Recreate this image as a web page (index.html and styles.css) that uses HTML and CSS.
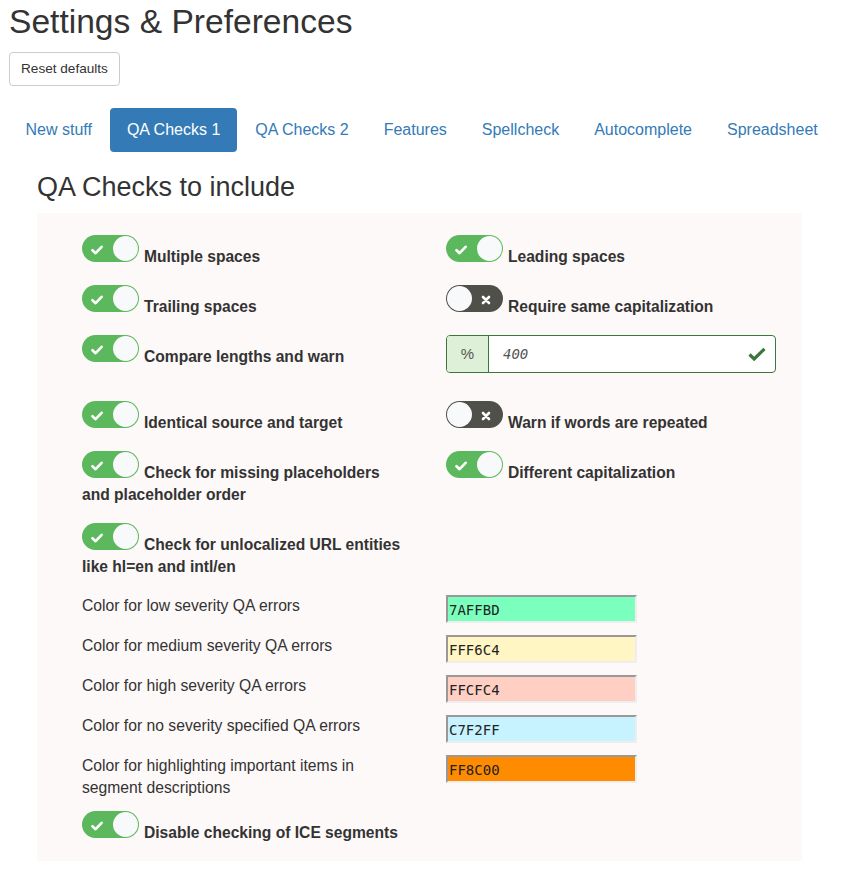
FILE: index.html
```html
<!DOCTYPE html>
<html lang="en">
<head>
<meta charset="utf-8">
<title>Settings &amp; Preferences</title>
<link rel="stylesheet" href="styles.css">
</head>
<body>
<div class="page">
  <h1 class="title">Settings &amp; Preferences</h1>
  <button class="btn" type="button">Reset defaults</button>
  <ul class="pills">
    <li><a href="#">New stuff</a></li>
    <li class="active"><a href="#">QA Checks 1</a></li>
    <li><a href="#">QA Checks 2</a></li>
    <li><a href="#">Features</a></li>
    <li><a href="#">Spellcheck</a></li>
    <li><a href="#">Autocomplete</a></li>
    <li><a href="#">Spreadsheet</a></li>
  </ul>
  <section class="tab">
    <h3 class="section-title">QA Checks to include</h3>
    <div class="panel">
      <div class="grid">
        <div class="cell"><span class="toggle on"><span class="track"><svg class="ico" width="12" height="10" viewBox="0 0 12 10"><path d="M1.5 5.2 L4.6 8.2 L10.6 1.8" fill="none" stroke="#fff" stroke-width="2.6" stroke-linecap="round" stroke-linejoin="round"/></svg><span class="knob"></span></span></span><span class="lbl">Multiple spaces</span></div>
        <div class="cell"><span class="toggle on"><span class="track"><svg class="ico" width="12" height="10" viewBox="0 0 12 10"><path d="M1.5 5.2 L4.6 8.2 L10.6 1.8" fill="none" stroke="#fff" stroke-width="2.6" stroke-linecap="round" stroke-linejoin="round"/></svg><span class="knob"></span></span></span><span class="lbl">Leading spaces</span></div>

        <div class="cell"><span class="toggle on"><span class="track"><svg class="ico" width="12" height="10" viewBox="0 0 12 10"><path d="M1.5 5.2 L4.6 8.2 L10.6 1.8" fill="none" stroke="#fff" stroke-width="2.6" stroke-linecap="round" stroke-linejoin="round"/></svg><span class="knob"></span></span></span><span class="lbl">Trailing spaces</span></div>
        <div class="cell"><span class="toggle off"><span class="track"><span class="knob"></span><svg class="ico" width="10" height="10" viewBox="0 0 10 10"><path d="M2 2 L8 8 M8 2 L2 8" fill="none" stroke="#fff" stroke-width="2.6" stroke-linecap="round"/></svg></span></span><span class="lbl">Require same capitalization</span></div>

        <div class="cell"><span class="toggle on"><span class="track"><svg class="ico" width="12" height="10" viewBox="0 0 12 10"><path d="M1.5 5.2 L4.6 8.2 L10.6 1.8" fill="none" stroke="#fff" stroke-width="2.6" stroke-linecap="round" stroke-linejoin="round"/></svg><span class="knob"></span></span></span><span class="lbl">Compare lengths and warn</span></div>
        <div class="cell cell-input">
          <div class="input-group">
            <span class="addon">%</span>
            <input class="num" type="text" value="400">
            <svg class="ok" width="18" height="14" viewBox="0 0 18 14"><path d="M1.5 7.5 L6.2 12 L16.5 1.8" fill="none" stroke="#3c763d" stroke-width="3.2" stroke-linejoin="miter"/></svg>
          </div>
        </div>

        <div class="cell"><span class="toggle on"><span class="track"><svg class="ico" width="12" height="10" viewBox="0 0 12 10"><path d="M1.5 5.2 L4.6 8.2 L10.6 1.8" fill="none" stroke="#fff" stroke-width="2.6" stroke-linecap="round" stroke-linejoin="round"/></svg><span class="knob"></span></span></span><span class="lbl">Identical source and target</span></div>
        <div class="cell"><span class="toggle off"><span class="track"><span class="knob"></span><svg class="ico" width="10" height="10" viewBox="0 0 10 10"><path d="M2 2 L8 8 M8 2 L2 8" fill="none" stroke="#fff" stroke-width="2.6" stroke-linecap="round"/></svg></span></span><span class="lbl">Warn if words are repeated</span></div>

        <div class="cell"><span class="toggle on"><span class="track"><svg class="ico" width="12" height="10" viewBox="0 0 12 10"><path d="M1.5 5.2 L4.6 8.2 L10.6 1.8" fill="none" stroke="#fff" stroke-width="2.6" stroke-linecap="round" stroke-linejoin="round"/></svg><span class="knob"></span></span></span><span class="lbl">Check for missing placeholders and placeholder order</span></div>
        <div class="cell"><span class="toggle on"><span class="track"><svg class="ico" width="12" height="10" viewBox="0 0 12 10"><path d="M1.5 5.2 L4.6 8.2 L10.6 1.8" fill="none" stroke="#fff" stroke-width="2.6" stroke-linecap="round" stroke-linejoin="round"/></svg><span class="knob"></span></span></span><span class="lbl">Different capitalization</span></div>

        <div class="cell first"><span class="toggle on"><span class="track"><svg class="ico" width="12" height="10" viewBox="0 0 12 10"><path d="M1.5 5.2 L4.6 8.2 L10.6 1.8" fill="none" stroke="#fff" stroke-width="2.6" stroke-linecap="round" stroke-linejoin="round"/></svg><span class="knob"></span></span></span><span class="lbl">Check for unlocalized URL entities like hl=en and intl/en</span></div>

        <div class="cell color-label first">Color for low severity QA errors</div>
        <div class="cell color-cell"><input class="swatch" type="text" value="7AFFBD" style="background-color:#7AFFBD"></div>

        <div class="cell color-label first">Color for medium severity QA errors</div>
        <div class="cell color-cell"><input class="swatch" type="text" value="FFF6C4" style="background-color:#FFF6C4"></div>

        <div class="cell color-label first">Color for high severity QA errors</div>
        <div class="cell color-cell"><input class="swatch" type="text" value="FFCFC4" style="background-color:#FFCFC4"></div>

        <div class="cell color-label first">Color for no severity specified QA errors</div>
        <div class="cell color-cell"><input class="swatch" type="text" value="C7F2FF" style="background-color:#C7F2FF"></div>

        <div class="cell color-label first">Color for highlighting important items in segment descriptions</div>
        <div class="cell color-cell"><input class="swatch" type="text" value="FF8C00" style="background-color:#FF8C00"></div>

        <div class="cell first"><span class="toggle on"><span class="track"><svg class="ico" width="12" height="10" viewBox="0 0 12 10"><path d="M1.5 5.2 L4.6 8.2 L10.6 1.8" fill="none" stroke="#fff" stroke-width="2.6" stroke-linecap="round" stroke-linejoin="round"/></svg><span class="knob"></span></span></span><span class="lbl">Disable checking of ICE segments</span></div>
      </div>
    </div>
  </section>
</div>
</body>
</html>
```

FILE: styles.css
```css
* { box-sizing: border-box; }

html, body {
  margin: 0;
  padding: 0;
  background: #fff;
}

body {
  font-family: "Liberation Sans", Arial, Helvetica, sans-serif;
  font-size: 16px;
  color: #333;
}

.page {
  padding: 3px 9px 0 9px;
}

.title {
  margin: 0;
  font-size: 33.6px;
  line-height: 37px;
  font-weight: 400;
  color: #333;
}

.btn {
  display: block;
  margin-top: 12px;
  height: 34px;
  padding: 6px 11px;
  font-family: "Liberation Sans", Arial, sans-serif;
  font-size: 13.6px;
  line-height: 20px;
  color: #333;
  background: #fff;
  border: 1px solid #ccc;
  border-radius: 4px;
}

.pills {
  display: flex;
  list-style: none;
  margin: 22px 0 0 0;
  padding: 0;
}

.pills li + li {
  margin-left: 2px;
}

.pills a {
  display: block;
  padding: 10px 16.5px;
  line-height: 24px;
  font-size: 16px;
  color: #337ab7;
  text-decoration: none;
  border-radius: 4px;
}

.pills li.active a {
  background: #337ab7;
  color: #fff;
}

.tab {
  margin-left: 28px;
  width: 765px;
}

.section-title {
  margin: 20px 0 11px 0;
  font-size: 27px;
  line-height: 30px;
  font-weight: 400;
  color: #333;
}

.panel {
  background: #fdf9f8;
  padding: 22px 0 0 45px;
}

.grid {
  display: grid;
  grid-template-columns: 328px 330px;
  column-gap: 36px;
  align-items: start;
}

.cell {
  line-height: 22px;
  margin-bottom: 17px;
}

.cell.first {
  grid-column: 1;
}

.lbl {
  font-weight: 700;
  color: #333;
  font-size: 15.6px;
}

.toggle {
  display: inline-block;
  overflow: hidden;
  width: 57px;
  height: 27px;
  border-radius: 14px;
  margin-right: 5px;
  vertical-align: baseline;
}

.toggle.on { background: #5cb85c; }
.toggle.off { background: #50504b; }

.track {
  display: flex;
  align-items: center;
  justify-content: space-between;
  height: 27px;
  padding: 0 1px;
}

.toggle.on .track { padding-left: 9px; }
.toggle.off .track { padding-right: 12px; }

.ico {
  display: block;
  margin-top: 2px;
}

.knob {
  display: block;
  width: 25px;
  height: 25px;
  border-radius: 50%;
  background: #f8f9fa;
}

.cell-input {
  margin-bottom: 28px;
}

.input-group {
  display: flex;
  align-items: center;
  width: 330px;
  height: 38px;
  border: 1px solid #3c763d;
  border-radius: 4px;
  background: #fff;
  overflow: hidden;
}

.addon {
  display: flex;
  align-items: center;
  justify-content: center;
  width: 42px;
  height: 100%;
  background: #dff0d8;
  border-right: 1px solid #3c763d;
  color: #555;
  font-size: 15px;
}

.num {
  flex: 1;
  min-width: 0;
  height: 100%;
  border: 0;
  outline: none;
  background: transparent;
  padding: 0 0 0 14px;
  font-family: "DejaVu Sans Mono", "Liberation Mono", monospace;
  font-size: 14px;
  font-style: italic;
  color: #555;
}

.ok {
  display: block;
  margin-right: 9px;
}

.color-label {
  margin-bottom: 12px;
  font-size: 15.7px;
  color: #333;
  line-height: 22px;
  margin-top: -2px;
  padding-top: 2px;
}

.color-cell {
  margin-bottom: 12px;
}

.swatch {
  display: block;
  width: 191px;
  height: 28px;
  margin: 0;
  padding: 2px 1px 0 1px;
  border-style: solid;
  border-width: 2px;
  border-color: #999 #eee #eee #999;
  font-family: "DejaVu Sans Mono", "Liberation Mono", monospace;
  font-size: 14px;
  color: #222;
  outline: none;
}
```
